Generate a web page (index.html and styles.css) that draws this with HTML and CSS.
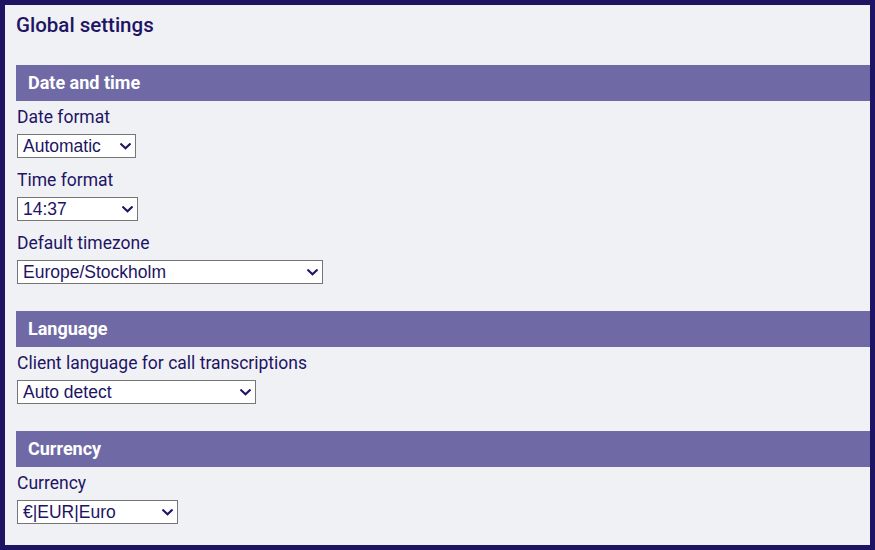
FILE: index.html
```html
<!DOCTYPE html>
<html lang="en">
<head>
<meta charset="utf-8">
<title>Global settings</title>
<link rel="stylesheet" href="styles.css">
</head>
<body>
<div class="frame">
  <h1 class="title">Global settings</h1>

  <section class="section">
    <h2 class="bar">Date and time</h2>
    <div class="field">
      <label class="label" for="df">Date format</label>
      <span class="select-wrap w-date">
        <select id="df" class="select"><option>Automatic</option></select>
        <svg class="chev" width="11" height="7" viewBox="0 0 11 7" aria-hidden="true"><path d="M1.2 1.2 L5.5 5.3 L9.8 1.2" fill="none" stroke="#1e1464" stroke-width="2.1" stroke-linecap="square"/></svg>
      </span>
    </div>
    <div class="field">
      <label class="label" for="tf">Time format</label>
      <span class="select-wrap w-time">
        <select id="tf" class="select"><option>14:37</option></select>
        <svg class="chev" width="11" height="7" viewBox="0 0 11 7" aria-hidden="true"><path d="M1.2 1.2 L5.5 5.3 L9.8 1.2" fill="none" stroke="#1e1464" stroke-width="2.1" stroke-linecap="square"/></svg>
      </span>
    </div>
    <div class="field">
      <label class="label" for="tz">Default timezone</label>
      <span class="select-wrap w-tz">
        <select id="tz" class="select"><option>Europe/Stockholm</option></select>
        <svg class="chev" width="11" height="7" viewBox="0 0 11 7" aria-hidden="true"><path d="M1.2 1.2 L5.5 5.3 L9.8 1.2" fill="none" stroke="#1e1464" stroke-width="2.1" stroke-linecap="square"/></svg>
      </span>
    </div>
  </section>

  <section class="section">
    <h2 class="bar">Language</h2>
    <div class="field">
      <label class="label" for="cl">Client language for call transcriptions</label>
      <span class="select-wrap w-lang">
        <select id="cl" class="select"><option>Auto detect</option></select>
        <svg class="chev" width="11" height="7" viewBox="0 0 11 7" aria-hidden="true"><path d="M1.2 1.2 L5.5 5.3 L9.8 1.2" fill="none" stroke="#1e1464" stroke-width="2.1" stroke-linecap="square"/></svg>
      </span>
    </div>
  </section>

  <section class="section">
    <h2 class="bar">Currency</h2>
    <div class="field">
      <label class="label" for="cu">Currency</label>
      <span class="select-wrap w-cur">
        <select id="cu" class="select"><option>€|EUR|Euro</option></select>
        <svg class="chev" width="11" height="7" viewBox="0 0 11 7" aria-hidden="true"><path d="M1.2 1.2 L5.5 5.3 L9.8 1.2" fill="none" stroke="#1e1464" stroke-width="2.1" stroke-linecap="square"/></svg>
      </span>
    </div>
  </section>
</div>
</body>
</html>
```

FILE: styles.css
```css
html, body {
  margin: 0;
  padding: 0;
}

body {
  width: 875px;
  height: 550px;
  overflow: hidden;
  font-family: Roboto, "Liberation Sans", sans-serif;
  color: #1e1464;
}

.frame {
  box-sizing: border-box;
  width: 875px;
  height: 550px;
  border: 5px solid #1e1464;
  background: #f0f1f5;
  padding: 8px 0 0 11px;
  display: flex;
  flex-direction: column;
}

.title {
  margin: 0 0 28px;
  font-size: 20.5px;
  line-height: 24px;
  font-weight: 500;
}

.section {
  display: flex;
  flex-direction: column;
  margin-bottom: 27px;
}

.bar {
  margin: 0;
  height: 36px;
  box-sizing: border-box;
  line-height: 35px;
  padding-left: 12px;
  background: #6f6aa6;
  color: #ffffff;
  font-size: 18px;
  font-weight: 700;
}

.field {
  display: flex;
  flex-direction: column;
  align-items: flex-start;
  margin-top: 12px;
}

.bar + .field {
  margin-top: 6px;
}

.label {
  display: block;
  margin-left: 1px;
  font-size: 17.5px;
  line-height: 20px;
  margin-bottom: 7px;
}

.select-wrap {
  position: relative;
  display: block;
  height: 24px;
  margin-left: 1px;
}

.select {
  -webkit-appearance: none;
  appearance: none;
  box-sizing: border-box;
  display: block;
  width: 100%;
  height: 24px;
  margin: 0;
  padding: 0 20px 0 5px;
  font-family: "Liberation Sans", Arial, sans-serif;
  font-size: 17.5px;
  color: #1e1464;
  background-color: #ffffff;
  border: 1px solid #767676;
  border-radius: 0;
}

.chev {
  position: absolute;
  right: 5px;
  top: 9px;
  pointer-events: none;
}

.w-date { width: 119px; }
.w-time { width: 121px; }
.w-tz { width: 306px; }
.w-lang { width: 239px; }
.w-cur { width: 161px; }
```
